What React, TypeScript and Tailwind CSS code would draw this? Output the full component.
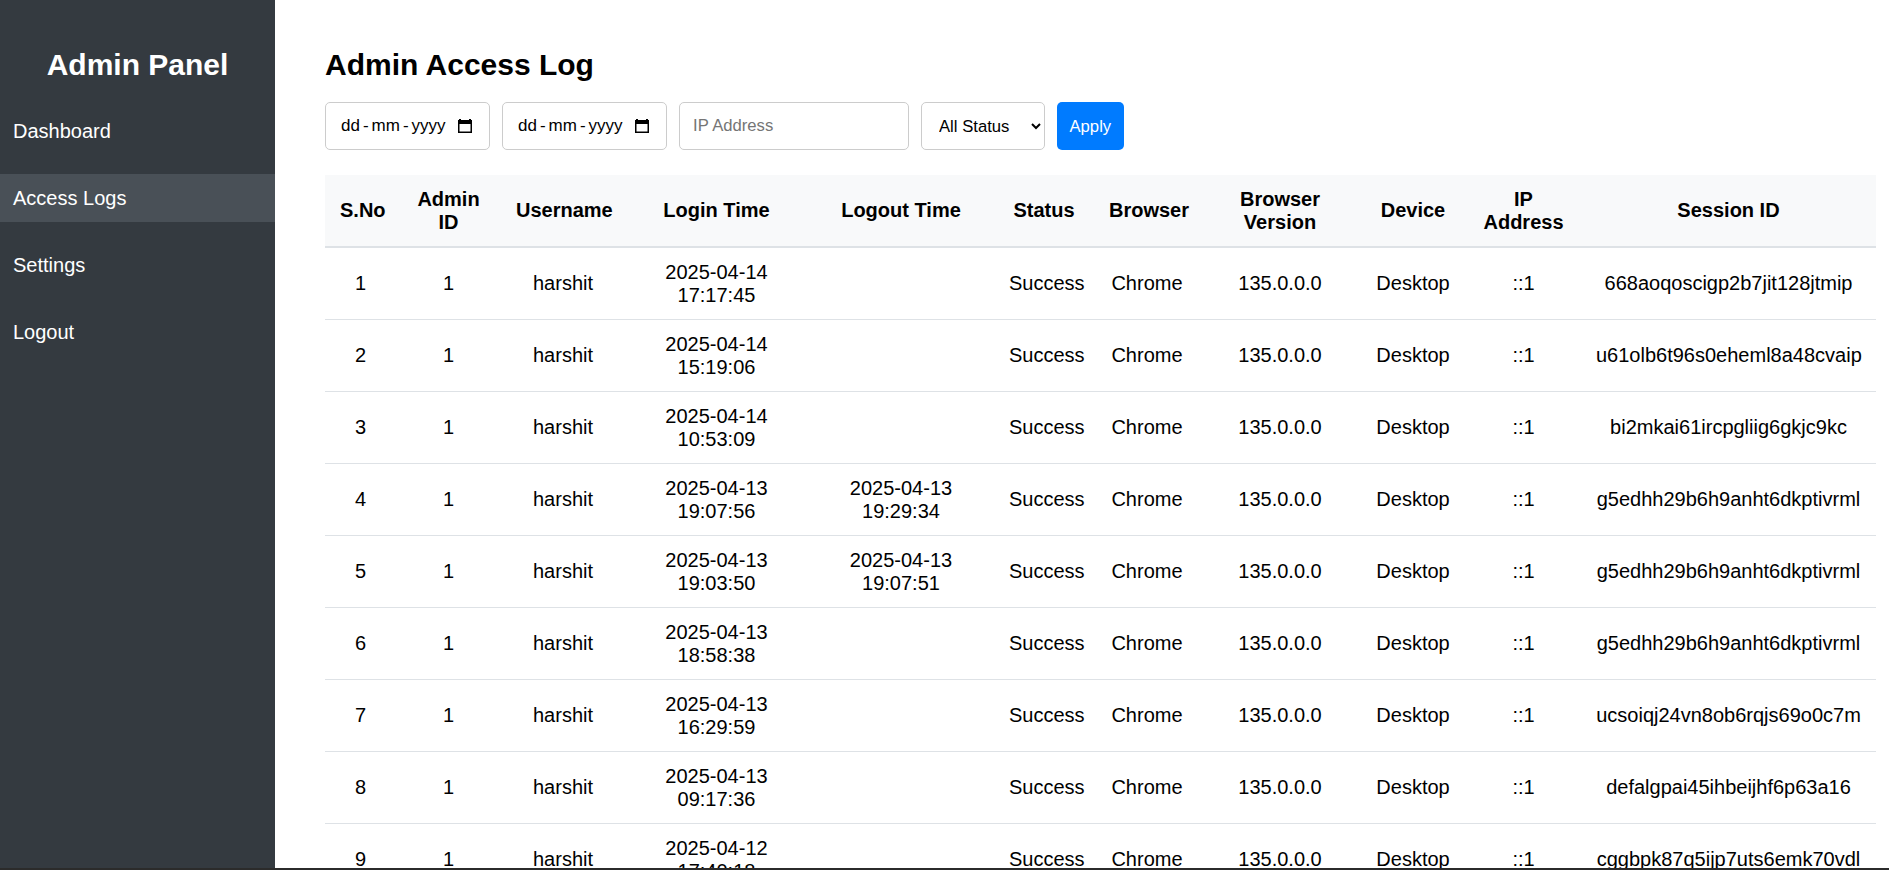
import React from "react";

type LogRow = {
  login: [string, string];
  logout?: [string, string];
  session: string;
};

const rows: LogRow[] = [
  { login: ["2025-04-14", "17:17:45"], session: "668aoqoscigp2b7jit128jtmip" },
  { login: ["2025-04-14", "15:19:06"], session: "u61olb6t96s0eheml8a48cvaip" },
  { login: ["2025-04-14", "10:53:09"], session: "bi2mkai61ircpgliig6gkjc9kc" },
  { login: ["2025-04-13", "19:07:56"], logout: ["2025-04-13", "19:29:34"], session: "g5edhh29b6h9anht6dkptivrml" },
  { login: ["2025-04-13", "19:03:50"], logout: ["2025-04-13", "19:07:51"], session: "g5edhh29b6h9anht6dkptivrml" },
  { login: ["2025-04-13", "18:58:38"], session: "g5edhh29b6h9anht6dkptivrml" },
  { login: ["2025-04-13", "16:29:59"], session: "ucsoiqj24vn8ob6rqjs69o0c7m" },
  { login: ["2025-04-13", "09:17:36"], session: "defalgpai45ihbeijhf6p63a16" },
  { login: ["2025-04-12", "17:40:18"], session: "cggbpk87q5ijp7uts6emk70vdl" },
  { login: ["2025-04-12", "11:02:44"], session: "cggbpk87q5ijp7uts6emk70vdl" },
];

// header label + column width measured from the screenshot
const columns: { label: string; width: string }[] = [
  { label: "S.No", width: "w-[71px]" },
  { label: "Admin ID", width: "w-[105px]" },
  { label: "Username", width: "w-[124px]" },
  { label: "Login Time", width: "w-[183px]" },
  { label: "Logout Time", width: "w-[186px]" },
  { label: "Status", width: "w-[100px]" },
  { label: "Browser", width: "w-[106px]" },
  { label: "Browser Version", width: "w-[160px]" },
  { label: "Device", width: "w-[106px]" },
  { label: "IP Address", width: "w-[115px]" },
  { label: "Session ID", width: "w-[295px]" },
];

const navItems = ["Dashboard", "Access Logs", "Settings", "Logout"];

function CalendarIcon() {
  return (
    <svg width="14" height="14" viewBox="0 0 14 14" fill="none">
      <rect x="1" y="0" width="2" height="2" fill="#000" />
      <rect x="11" y="0" width="2" height="2" fill="#000" />
      <rect x="0.75" y="1.75" width="12.5" height="11.5" stroke="#000" strokeWidth="1.5" fill="none" />
      <rect x="1" y="2" width="12" height="3" fill="#000" />
    </svg>
  );
}

function DateField() {
  return (
    <div className="flex h-[48px] w-[165px] items-center justify-between rounded-[5px] border border-[#ccc] bg-white pl-[15px] pr-[17px] text-[17px] text-black">
      <span className="flex items-center">
        dd<span className="mx-[3px]">-</span>mm<span className="mx-[3px]">-</span>yyyy
      </span>
      <CalendarIcon />
    </div>
  );
}

function TwoLine({ value }: { value?: [string, string] }) {
  if (!value) return null;
  return (
    <>
      {value[0]}
      <br />
      {value[1]}
    </>
  );
}

export default function App() {
  return (
    <div className="flex min-h-screen font-['Liberation_Sans',Arial,sans-serif] text-black">
      <aside className="w-[275px] shrink-0 bg-[#343a40] pt-[48px] text-white">
        <h2 className="text-center text-[30px] font-bold leading-[34px]">Admin Panel</h2>
        <ul className="mt-[25px] flex flex-col gap-[19px]">
          {navItems.map((item) => (
            <li
              key={item}
              className={
                item === "Access Logs"
                  ? "bg-[#495057] px-[13px] py-[12.5px] text-[20px] leading-[23px]"
                  : "px-[13px] py-[12.5px] text-[20px] leading-[23px]"
              }
            >
              {item}
            </li>
          ))}
        </ul>
      </aside>

      <main className="flex-1 bg-white pl-[50px] pr-[13px] pt-[48px]">
        <h1 className="text-[30px] font-bold leading-[34px]">Admin Access Log</h1>

        <div className="mt-[20px] flex items-center gap-[12px]">
          <DateField />
          <DateField />
          <input
            placeholder="IP Address"
            className="h-[48px] w-[230px] rounded-[5px] border border-[#ccc] px-[13px] text-[16.67px] placeholder:text-[#757575] focus:outline-none"
          />
          <select className="h-[48px] w-[124px] rounded-[5px] border border-[#ccc] bg-white px-[13px] text-[16.67px] text-black">
            <option>All Status</option>
            <option>Success</option>
            <option>Failed</option>
          </select>
          <button className="h-[48px] rounded-[5px] bg-[#007bff] px-[12.5px] text-[16.67px] text-white">
            Apply
          </button>
        </div>

        <table className="mt-[25px] w-full table-fixed border-collapse text-center text-[20px] leading-[23px]">
          <colgroup>
            {columns.map((c) => (
              <col key={c.label} className={c.width} />
            ))}
          </colgroup>
          <thead>
            <tr className="border-b-2 border-[#dee2e6] bg-[#f8f9fa]">
              {columns.map((c) => (
                <th key={c.label} className="px-[15px] py-[12.5px] font-bold">
                  {c.label}
                </th>
              ))}
            </tr>
          </thead>
          <tbody>
            {rows.map((r, i) => (
              <tr key={i} className="border-b border-[#dee2e6]">
                <td className="px-[15px] py-[12.5px]">{i + 1}</td>
                <td className="px-[15px] py-[12.5px]">1</td>
                <td className="px-[15px] py-[12.5px]">harshit</td>
                <td className="px-[15px] py-[12.5px]">
                  <TwoLine value={r.login} />
                </td>
                <td className="px-[15px] py-[12.5px]">
                  <TwoLine value={r.logout} />
                </td>
                <td className="px-[15px] py-[12.5px]">Success</td>
                <td className="px-[15px] py-[12.5px]">Chrome</td>
                <td className="px-[15px] py-[12.5px]">135.0.0.0</td>
                <td className="px-[15px] py-[12.5px]">Desktop</td>
                <td className="px-[15px] py-[12.5px]">::1</td>
                <td className="px-[15px] py-[12.5px]">{r.session}</td>
              </tr>
            ))}
          </tbody>
        </table>
      </main>

      {/* thin dark strip along the window's bottom edge */}
      <div className="fixed inset-x-0 bottom-0 h-[2px] bg-[#2b2b2b]" />
    </div>
  );
}
